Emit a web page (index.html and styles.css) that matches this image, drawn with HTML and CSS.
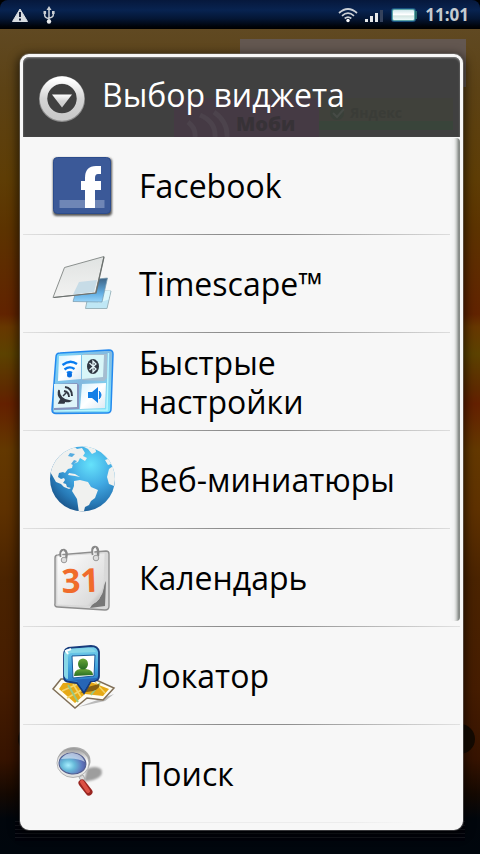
FILE: index.html
```html
<!DOCTYPE html>
<html lang="ru">
<head>
<meta charset="utf-8">
<meta name="viewport" content="width=device-width, initial-scale=1">
<title>Выбор виджета</title>
<link rel="stylesheet" href="styles.css">
</head>
<body>
<div class="screen">
  <header class="status">
    <div class="status-group">
      <svg width="18" height="16" viewBox="0 0 18 16" aria-hidden="true"><path d="M9 2 16.500 14.500H1.500Z" fill="#d9dde1" stroke="#d9dde1" stroke-linejoin="round"/><path d="M9 5v5M9 11.500v2" stroke="#15203a" stroke-width="2"/></svg>
      <svg width="12" height="18" viewBox="0 0 12 18" fill="none" stroke="#ccd0d5" stroke-width="1.500" aria-hidden="true"><path d="M6 3v12M1.700 6v3.500Q2 12 6 12.500M10.300 6v3q-.3 2.500-4.300 3"/><path d="M6 0 8.500 4h-5Z" fill="#ccd0d5" stroke="none"/><circle cx="6" cy="15.500" r="2.200" fill="#e8eaec" stroke="none"/><path d="M.5 5h2.600v3H.5zM9 5h2.600v3H9z" fill="#ccd0d5" stroke="none"/></svg>
    </div>
    <div class="status-group status-right">
      <svg width="20" height="16" viewBox="0 0 20 16" fill="none" stroke="#cbd0d6" stroke-width="1.700" aria-hidden="true"><path d="M1 6Q10-2 19 6M4 8.800q6-5.200 12 0M6.700 11.500q3.300-2.800 6.600 0"/><circle cx="10" cy="13.500" r="1.700" fill="#fff" stroke="none"/></svg>
      <svg width="18" height="14" viewBox="0 0 18 14" aria-hidden="true"><path d="M0 11h3v3H0zM5 8h3v6H5zM10 5h3v9h-3z" fill="#e6e8ea"/><path d="M15 2h3v12h-3z" fill="#35425c"/></svg>
      <svg width="28" height="16" viewBox="0 0 28 16" aria-hidden="true"><defs><linearGradient id="cell" x2="0" y2="1"><stop stop-color="#cfe6ea"/><stop offset=".45" stop-color="#fff"/><stop offset=".6" stop-color="#d5e6e2"/><stop offset="1" stop-color="#eefafa"/></linearGradient></defs><rect x="1" y="1" width="25" height="14" rx="3" fill="#17507f"/><rect x="2" y="2" width="23" height="12" rx="2" fill="#5fa7a8"/><rect x="3" y="3" width="21" height="10" rx="1" fill="url(#cell)"/><path d="M25 4h2v8h-2z" fill="#286c70"/></svg>
      <time class="clock">11:01</time>
    </div>
  </header>

  <div class="home">
    <div class="home-widget" aria-hidden="true"></div>
    <div class="home-label" aria-hidden="true"></div>
    <div class="stripes" aria-hidden="true"></div>
    <main class="dialog" role="dialog" aria-labelledby="title">
      <div class="title-bar">
        <svg class="ghost" width="290" height="42" viewBox="0 0 290 42" aria-hidden="true"><path d="M4 3h145v39H4z" fill="#453a44"/><path d="M149 3h134v23H149z" fill="#40413b"/><path d="M149 26h134v9H149z" fill="#39443a"/><path d="M18 27q8 6 7 15M30 20q16 7 15 22M44 17q14 10 13 25" fill="none" stroke="#4c434c" stroke-width="5"/><text x="66" y="36" class="ghost-big">Моби</text><circle cx="167" cy="18" r="7" fill="#394039"/><path d="m163 18 4 4 7-8" fill="none" stroke="#464b46" stroke-width="2"/><text x="180" y="23" class="ghost-small">Яндекс</text></svg>
        <svg class="title-icon" width="48" height="48" viewBox="0 0 48 48" aria-hidden="true"><defs><linearGradient id="ring" x2="0" y2="1"><stop stop-color="#fff"/><stop offset=".5" stop-color="#d5d5d5"/><stop offset="1" stop-color="#c9c9c9"/></linearGradient></defs><circle cx="24" cy="24" r="19" fill="none" stroke="#8d8d8d" stroke-width="8"/><circle cx="24" cy="23.500" r="18.500" fill="none" stroke="url(#ring)" stroke-width="7.500"/><path d="M14 19.500h20L24 32.500Z" fill="url(#ring)"/></svg>
        <h1 id="title">Выбор виджета</h1>
      </div>
      <ul class="list">
        <li><button type="button">
          <svg width="90" height="80" viewBox="0 0 90 80" aria-hidden="true"><defs><filter id="soft"><feGaussianBlur stdDeviation="1.200"/></filter></defs><rect x="13" y="12" width="59" height="58" rx="4" fill="#555" filter="url(#soft)"/><rect x="13.500" y="11.500" width="57" height="56" rx="4" fill="#3b5998" stroke="#2c4c8c"/><path d="M19.500 54h45v8h-45z" fill="#6f86b6"/><path d="M45 62V44h-4v-9h4v-3Q45 20 56 20h5v8h-3q-3 0-3 4v3h6v9h-6v18Z" fill="#fff"/></svg>
          <span>Facebook</span></button></li>
        <li><button type="button">
          <svg width="90" height="80" viewBox="0 -1 90 80" aria-hidden="true"><defs><linearGradient id="glass" x2="0" y2="1"><stop stop-color="#e0e3e2"/><stop offset="1" stop-color="#f2f2f1"/></linearGradient><linearGradient id="pane" x2="0" y2="1"><stop stop-color="#3f6384"/><stop offset=".65" stop-color="#63afe4"/><stop offset="1" stop-color="#9ad6fa"/></linearGradient></defs><path d="M49 46h22l-4 17.500H45.500Z" fill="#bfe7f5" stroke="#9cb5bd"/><path d="m60 46 10.500-.5-2 9L58 58Z" fill="#ddf7fb"/><path d="m39 36 28.500-3L62 57l-29-.5Z" fill="url(#pane)" stroke="#7598ac" stroke-width=".7"/><path d="M24.500 22.500 64 11.500 55.500 48 13 52.500Z" fill="url(#glass)" stroke="#8b908e" stroke-width="1" stroke-linejoin="round"/><path d="m39 37 18-2-3 12-21 2.500Z" fill="#c7dce7"/><path d="m64 12-8 36-42 4.500" fill="none" stroke="#6b706e" stroke-width="1.200"/></svg>
          <span>Timescape™</span></button></li>
        <li><button type="button">
          <svg width="90" height="80" viewBox="0 1 90 80" aria-hidden="true"><defs><linearGradient id="tray" x2="1" y2="1"><stop stop-color="#75d9ff"/><stop offset=".5" stop-color="#83b9df"/><stop offset="1" stop-color="#80eaff"/></linearGradient><linearGradient id="tile" x2="1" y2="1"><stop stop-color="#d8f4ff"/><stop offset=".5" stop-color="#fff"/><stop offset="1" stop-color="#dbe9f3"/></linearGradient></defs><path d="m20 12 49-3q4 0 4 4l-2 55q0 4-4 4l-51 .5q-4 0-4-4L16 16q0-4 4-4Z" fill="url(#tray)" stroke="#2389ee" stroke-width="1.500"/><path d="m68.500 12-1.500 57-53 1" fill="none" stroke="#b9f7ff" stroke-width="1.500"/><path d="m19 15 22-1v24l-23 2Z" fill="url(#tile)"/><path d="m42 15 2-2h23v24l-3 3-22-1Z" fill="#a4bdd0"/><path d="M42 14h22l-1 22-21 2Z" fill="#d8f6f8"/><path d="m14 43 23-1 2 2v24l-25 1Z" fill="#8794bd"/><path d="M14 43h23v23l-23 1Z" fill="#dff4f9"/><path d="m42 43 24-1-1 25-25 1Z" fill="url(#tile)"/><path d="M22.500 24q7.500-6 14.500-1M24.500 28.500q5-4 10-.5M27 32q2.500-1.500 5 0" fill="none" stroke="#087cf0" stroke-width="2.300"/><circle cx="29.500" cy="34" r="2.500" fill="#076ce0"/><ellipse cx="53" cy="25.500" rx="6" ry="7.500" fill="#303742"/><path d="m49.500 22 6.500 6-3 3V20l3 3-6.500 6" fill="none" stroke="#e5f5f8" stroke-width="1.300"/><path d="M19 49q0 10 11 11-2 1-5 0l-1 2h-5l2-4q-4-4-2-9ZM23 55l3-3" fill="#333944" stroke="#333944" stroke-width="1.500"/><path d="M24 50q5 1 5 6M25 46q7 1 7 9" fill="none" stroke="#333944" stroke-width="1.900"/><path d="M48 51h4l6-5v16l-6-5h-4Z" fill="#137fe6"/><path d="M59 50q4 4 0 8" fill="#137fe6" stroke="#137fe6"/></svg>
          <span>Быстрые настройки</span></button></li>
        <li><button type="button">
          <svg width="90" height="80" viewBox="0 0 90 80" aria-hidden="true"><defs><radialGradient id="sea" cx=".63" cy=".28" r=".75"><stop stop-color="#65e2fb"/><stop offset=".45" stop-color="#41a9e3"/><stop offset=".8" stop-color="#277ab7"/><stop offset="1" stop-color="#1c598f"/></radialGradient><clipPath id="disc"><circle cx="42.500" cy="39" r="32.500"/></clipPath></defs><circle cx="42.500" cy="39" r="32.500" fill="url(#sea)"/><g clip-path="url(#disc)" fill="#f0f1ef"><path d="M6 23 22 8l12-2 3 3 5-1 3 5-2 3 4 2-2 3-5-3-2 4-5 2-1 4-4 1-3 4-2-1-4 1-1 4 3 2 3-1 1 2-2 3 3 1 1 3 4 1-2 1-5-2-3-3-5-2-4-7-3-5Z"/><path d="m46 5 9 1 1 6-4 2-4-5-6-3ZM63 9l9 9 2 12-3-6-3 1-3-5 3-1-6-6Z"/><path d="m73 26-4 3-2 8 2 7 5 2 3-15Z"/><path d="m34 41 6-1 8 2 3 5 7 3-3 8-4 3-2 4-4 2-2 8-4-2-2-14-5-8 2-5Z"/><path d="m29 33 6 1 5 3-5-1-7-1Z"/></g><path d="m30 13 5 1-3 3-4-1ZM34 20l3 1-4 4-2-1Z" fill="#55ace0"/></svg>
          <span>Веб-миниатюры</span></button></li>
        <li><button type="button">
          <svg width="90" height="80" viewBox="0 2 90 80" aria-hidden="true"><defs><linearGradient id="sheet" x2="1" y2="1"><stop stop-color="#fff"/><stop offset=".8" stop-color="#dcdcdc"/><stop offset="1" stop-color="#999"/></linearGradient></defs><path d="m18 19 48-4q3 0 3 3v52q0 4-4 4L18 71q-4 0-3-4V22q0-3 3-3Z" fill="#d9d9d9" stroke="#8e8e8e" stroke-width="1.400"/><path d="m66 45-1 25-15 2 11-17" fill="#777"/><path d="m17 20 48-3-1 32q-2 18-18 21l-29-1Z" fill="url(#sheet)" stroke="#d7d7d7" stroke-width=".7"/><path d="M64 47q-1 18-17 23 12-2 14-12Z" fill="#ccc"/><text x="22" y="57" class="date" transform="rotate(-2 22 57)">31</text><g fill="none"><path d="M21 21q-2-7 3-7 4 1 2 9M53 19q-2-8 2-8 4 0 3 9" stroke="#888" stroke-width="2.400"/><path d="M22 21q-1-6 2-6M54 19q-1-7 2-7" stroke="#fff"/><circle cx="24" cy="24" r="2.800" fill="#ddd" stroke="#999"/><circle cx="56" cy="22" r="2.800" fill="#ddd" stroke="#999"/></g></svg>
          <span>Календарь</span></button></li>
        <li><button type="button">
          <svg width="90" height="80" viewBox="0 0 90 80" aria-hidden="true"><defs><linearGradient id="box" x2="0" y2="1"><stop stop-color="#7bd4eb"/><stop offset=".5" stop-color="#3c9edc"/><stop offset="1" stop-color="#225fb7"/></linearGradient><linearGradient id="person" x2="0" y2="1"><stop stop-color="#68a637"/><stop offset="1" stop-color="#256c22"/></linearGradient></defs><path d="m38 71 36-13-9 7Z" fill="#bbb"/><path d="m21 43-8 10 22 19 12-10 16 2 11-12-20-9Z" fill="#fffdf2" stroke="#806f58" stroke-width="1.500"/><path d="m23 47-4 6 16 14 10-9 18 2 6-7-18-7Z" fill="#e6a915"/><path d="m22 55 18-8M27 62l18-10M55 46l10 11M33 48l8 13" stroke="#f3d469" stroke-width="1.500"/><path d="m28 49 10 17M60 47l-9 12" stroke="#9bc780" stroke-width="2"/><path d="m41 57 3-5 15-4q2 4-6 7Z" fill="#886010"/><path d="m28 12 23-2q7 0 8 6v24q0 4-4 5h-4l-7 12-7-10-7-1q-6 0-6-5V19q0-6 4-7Z" fill="url(#box)" stroke="#173b7c" stroke-width="1.800"/><path d="m27 13 22-1q4 0 7 4l-24 1q-4 0-4 5v21q-4-1-4-4V19q0-4 3-6Z" fill="#87d7e8"/><path d="m28 18-2-3 5-2" fill="none" stroke="#fff" stroke-width="2"/><path d="m30 44 27-2v-2l1 2-4 3h-4l-6 10-7-10Z" fill="#2765b6"/><path d="m32 20 23-1-1 21-21 2Z" fill="#fff" stroke="#1b5a9b"/><path d="M34 40q0-6 6-7h6q7 1 7 6Z" fill="url(#person)"/><ellipse cx="43" cy="28" rx="5" ry="5.500" fill="url(#person)"/></svg>
          <span>Локатор</span></button></li>
        <li><button type="button">
          <svg width="90" height="80" viewBox="0 -1 90 80" aria-hidden="true"><defs><radialGradient id="lens" cx=".35" cy=".6" r=".7"><stop stop-color="#a8efff"/><stop offset=".35" stop-color="#67bad9"/><stop offset=".75" stop-color="#5f75bc"/><stop offset="1" stop-color="#4d5798"/></radialGradient><linearGradient id="rim" x2="0" y2="1"><stop stop-color="#999"/><stop offset=".45" stop-color="#fff"/><stop offset="1" stop-color="#ddd"/></linearGradient></defs><path d="M47 34q8-4 14 0 3 5-3 9-7 4-14 3" fill="#777" filter="url(#soft)" opacity=".7"/><ellipse cx="34" cy="26" rx="16.500" ry="14" fill="#aaa"/><ellipse cx="33" cy="28" rx="16" ry="14.500" fill="url(#rim)" stroke="#999" stroke-width=".7"/><ellipse cx="32.500" cy="28.500" rx="13.500" ry="10.500" transform="rotate(5 32 28)" fill="url(#lens)" stroke="#505b8c"/><path d="M21 24q5-7 12-6 9 1 12 9-8-5-24-3Z" fill="#e9f6fa" opacity=".6"/><path d="m39 42 4-2 2 4-4 2Z" fill="#ddd" stroke="#aaa"/><path d="m42 48 7 9" stroke="#992621" stroke-width="7" stroke-linecap="round"/><path d="m42 47 6 9" stroke="#dc5145" stroke-width="4" stroke-linecap="round"/></svg>
          <span>Поиск</span></button></li>
      </ul>
      <div class="scroll-thumb" aria-hidden="true"></div>
    </main>
  </div>
</div>
</body>
</html>
```
FILE: styles.css
```css
* {
  box-sizing: border-box;
}

body {
  margin: 0;
  background: #000;
  font-family: "Open Sans", "Noto Sans", sans-serif;
}

.screen {
  min-height: 100vh;
  display: flex;
  flex-direction: column;
}

.status {
  height: 29px;
  padding: 0 11px;
  display: flex;
  align-items: center;
  justify-content: space-between;
  border-radius: 8px 8px 0 0;
  background: linear-gradient(#06183c, #082350 35%, #041634 65%, #00040b 90%, #000);
}

.status-group {
  display: flex;
  align-items: center;
  gap: 14px;
}

.status-right {
  gap: 7px;
}

.clock {
  color: #c5cbd0;
  font-size: 17px;
  line-height: 24px;
  font-weight: 700;
}

.home {
  position: relative;
  flex: 1;
  padding: 25px 17px 24px 20px;
  background: linear-gradient(#604922, #5c4215 60px, #5e3d05 150px, #5c3300 200px, #612300 285px, #673700 298px, #5c4200 325px, #5e2a00 360px, #642000 375px, #633800 420px, #5e3100 480px, #4a2300 550px, #451c00 660px, #361300 730px, #150902 765px, #01060c 790px, #00060d);
}

.home-widget {
  position: absolute;
  inset: 10px 14px auto 240px;
  height: 48px;
  background: #635750;
}

.home-label {
  position: absolute;
  inset: auto 5px 100px 18px;
  height: 30px;
  border-radius: 15px;
  background: #140a02;
}

.stripes {
  position: absolute;
  inset: auto 15px 13px;
  height: 20px;
  background: repeating-linear-gradient(#15171e 0 1px, #01020a 1px 4px);
}

.dialog {
  position: relative;
  border: 3px solid #f7f7f7;
  border-radius: 9px;
  background: #f7f7f7;
  box-shadow: 0 0 0 1px #88888866, 0 3px 10px 3px #0000008c;
}

.title-bar {
  position: relative;
  height: 80px;
  padding: 0 15px;
  display: flex;
  align-items: center;
  gap: 16px;
  border-radius: 6px 6px 0 0;
  background: #404040;
  box-shadow: inset 0 1px 2px #888;
}

.title-icon {
  position: relative;
  margin-top: 4px;
}

.title-bar h1 {
  position: relative;
  margin: 0 0 4px;
  color: #fff;
  font-size: 32px;
  line-height: 36px;
  font-weight: 400;
}

.ghost {
  position: absolute;
  right: 0;
  bottom: 0;
}

.ghost-big {
  fill: #373237;
  font-size: 20px;
  font-weight: 800;
}

.ghost-small {
  fill: #3a3c37;
  font-size: 14px;
  font-weight: 700;
}

.date {
  fill: #f06b2b;
  font-size: 33px;
  font-weight: 700;
}

.list {
  margin: 0;
  padding: 0 0 4px;
  list-style: none;
}

.list li {
  border-bottom: 1px solid;
  border-image: linear-gradient(90deg, #e2e2e2, #8e8e8e 45%, #8e8e8e 60%, #e2e2e2) 1;
}

.list li:last-child {
  border-image: linear-gradient(90deg, #f7f7f7 10%, #ececec 30%, #ececec 75%, #f7f7f7 90%) 1;
}

.list button {
  width: 100%;
  height: 97px;
  padding: 0 24px 0 17px;
  display: flex;
  align-items: center;
  gap: 9px;
  border: 0;
  background: none;
  color: #000;
  font: inherit;
  font-size: 32px;
  line-height: 39px;
  text-align: left;
}

.list svg {
  flex: none;
}

.scroll-thumb {
  position: absolute;
  top: 81px;
  right: 0;
  width: 10px;
  height: 483px;
  border-radius: 4px;
  background: linear-gradient(90deg, #f7f7f7, #f1f1f1 40%, #d5d7d5 60%, #8d918e 85%, #858985);
}
```
